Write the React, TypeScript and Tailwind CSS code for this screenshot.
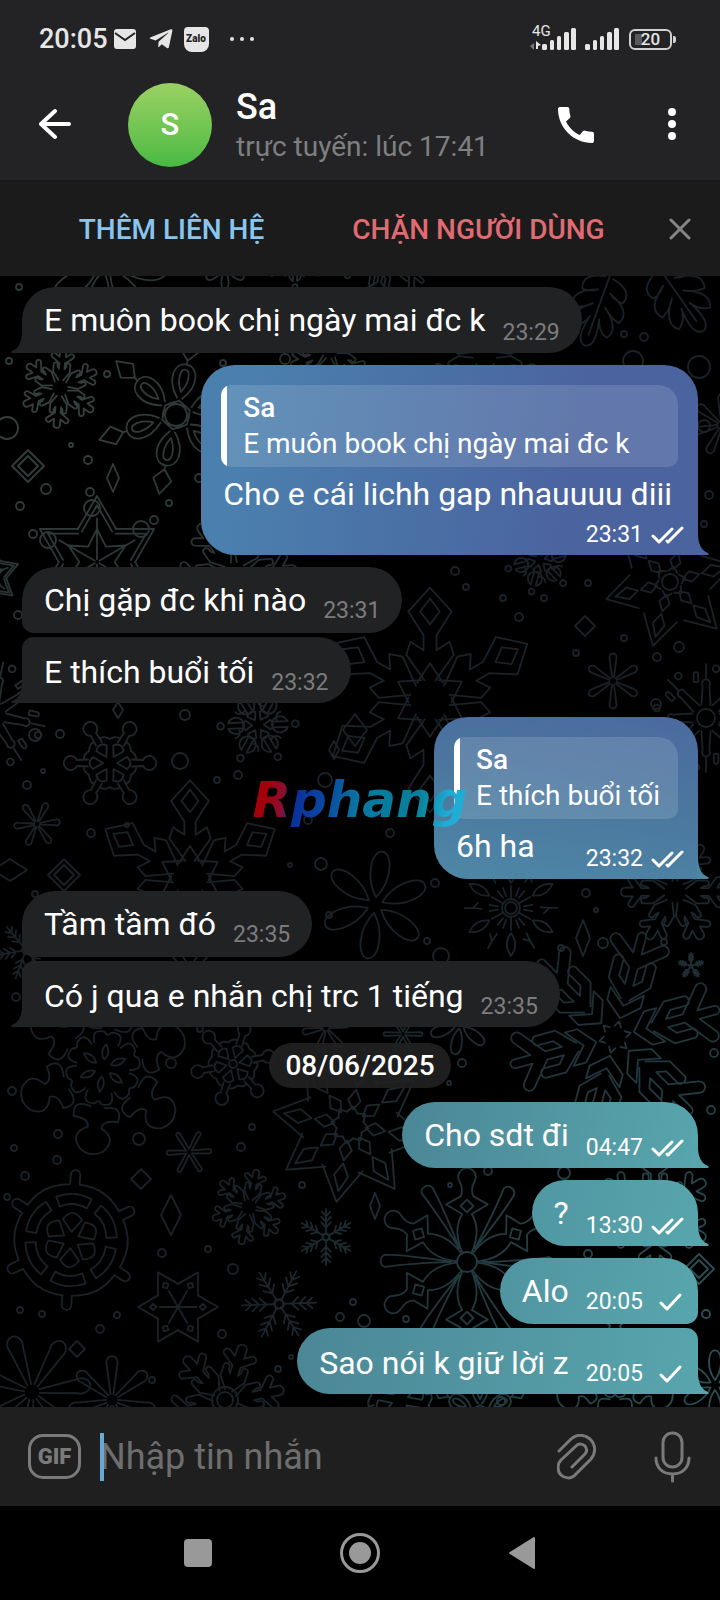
import { MdCall } from "react-icons/md";
import { FaTelegramPlane } from "react-icons/fa";
import clsx from "clsx";

type Position = "single" | "first" | "last";

type Message = {
    text: string;
    time: string;
    out?: boolean;
    seen?: boolean;
    position?: Position;
    reply?: string;
    stacked?: boolean; // time goes on its own row under the text
    fill?: string;
    tail?: string;
};

const before: Message[] = [
    { text: "E muôn book chị ngày mai đc k", time: "23:29" },
    {
        text: "Cho e cái lichh gap nhauuuu diii",
        time: "23:31",
        out: true,
        seen: true,
        stacked: true,
        reply: "E muôn book chị ngày mai đc k",
        fill: "bg-[linear-gradient(100deg,#4b80ae_8%,#4a70a6_45%,#4b639f_75%)]",
        tail: "text-[#4b659f]",
    },
    { text: "Chị gặp đc khi nào", time: "23:31", position: "first" },
    { text: "E thích buổi tối", time: "23:32", position: "last" },
    {
        text: "6h ha",
        time: "23:32",
        out: true,
        seen: true,
        reply: "E thích buổi tối",
        fill: "bg-[linear-gradient(190deg,#4b6b9f_5%,#4b789f_50%,#4e87a6)]",
        tail: "text-[#4e87a6]",
    },
    { text: "Tầm tầm đó", time: "23:35", position: "first" },
    { text: "Có j qua e nhắn chị trc 1 tiếng", time: "23:35", position: "last" },
];

const teal = "bg-[linear-gradient(100deg,#4b8796,#58a5ad)]";

const after: Message[] = [
    { text: "Cho sdt đi", time: "04:47", out: true, seen: true, fill: teal, tail: "text-[#58a5ad]" },
    { text: "?", time: "13:30", out: true, seen: true, fill: "bg-[linear-gradient(100deg,#5097a2,#58a5ad)]", tail: "text-[#58a5ad]" },
    { text: "Alo", time: "20:05", out: true, position: "first", fill: "bg-[linear-gradient(100deg,#5095a1,#58a5ad)]" },
    { text: "Sao nói k giữ lời z", time: "20:05", out: true, position: "last", fill: teal, tail: "text-[#58a5ad]" },
];

/* ---------- wallpaper ---------- */

// each arm points up from the origin and is about 100 units long
const arms: Record<string, string> = {
    fern: "M-6-20L-21-40V-58a5 5 0 0 1 10 0V-54L-7-48V-62L-26-76a6 6 0 0 1 8-9L-8-78V-92a8 8 0 0 1 16 0V-78L18-85a6 6 0 0 1 8 9L7-62V-48L11-54V-58a5 5 0 0 1 10 0V-40L6-20",
    petal: "M0-14C-24-46-20-96 0-96S24-46 0-14Z",
    drop: "M-3-12L-11-72A12 14 0 1 1 11-72L3-12",
    knob: "M-7-44L-6-66A14 14 0 1 1 6-66L7-44M-24-42Q-16-54-7-52M24-42Q16-54 7-52M0-14L-12-34Q0-48 12-34Z",
    ring: "M-6-34V-62A17 17 0 1 0 6-62V-34M-7-78a7 7 0 1 0 14 0a7 7 0 1 0-14 0M-6-40Q-22-34-26-48M0-12L-10-26Q0-36 10-26Z",
    loops: "M-13-15L0-22L13-15M-4-26C-26-52-18-78 0-78S26-52 4-26M0-36C-10-52-8-70 0-70S10-52 0-36M0-80V-86M0-84L-14-100L0-122L14-100Z",
    rhomb: "M-5-18L-22-42L-18-54L-6-46V-60L-20-82L0-104L20-82L6-60V-46L18-54L22-42L5-18M0-70L-9-82L0-94L9-82ZM-12-16L0-34L12-16",
    tree: "M-4-36L-20-52V-72a5 5 0 0 1 9 0V-56L-4-50V-66L-26-84a5 5 0 0 1 7-8L-4-80V-96a4 4 0 0 1 8 0V-80L19-92a5 5 0 0 1 7 8L4-66V-50L11-56V-72a5 5 0 0 1 9 0V-52L4-36M-16-32L0-18L16-32V-44L0-30L-16-44ZM-3-10L0-15L3-10",
    star: "M-29-50L0-100L29-50M-23-46L0-86L23-46M-13-24L0-50L13-24M0-4V-66",
    dotstar: "M-29-50L0-100L29-50M0-2V-46M-8-62L0-70L8-62L0-54Z",
    leafstar: "M-26-56L0-100L26-56M0-50L-9-66L0-86L9-66ZM0-20L-8-32L0-46L8-32ZM-7-16L0-24L7-16",
    burst: "M-8-24L-6-58A7 7 0 1 1 6-58L8-24M0-72V-96M-22-64V-78a4 4 0 0 1 8 0V-64ZM12-88a6 6 0 1 0 12 0a6 6 0 1 0-12 0",
    wheel: "M-7-84V-96a7 7 0 0 1 14 0V-84M7-82Q30-80 42-72M-7-82Q-30-80-42-72M-26-62Q0-74 26-62L20-48Q0-58-20-48ZM0-12L-14-30Q0-50 14-30Z",
    line: "M0-10V-100M0-34L-17-52M0-34L17-52M0-54L-17-72M0-54L17-72M0-74L-14-90M0-74L14-90M-6-10L0-16L6-10",
    crystal: "M0-20V-44M0-50C-12-66-10-82 0-96C10-82 12-66 0-50ZM-10-24L-16-40M10-24L16-40M28-52L38-66L42-52M38-66L46-80",
    ribbon: "M-6-12Q-18-40-6-60L-26-72L-8-82Q-4-90-9-100A11 11 0 1 1 9-100Q4-90 8-82L26-72L6-60Q18-40 6-12M0-62L-8-70L0-78L8-70ZM10-17Q34-62 46-92a8 8 0 0 1 13 8Q46-62 10-17",
    stick: "M-7-12L-9-88a9 9 0 0 1 18 0L7-12",
    bush: "M-8-46Q-30-40-26-60Q-8-60-8-70Q-28-80-14-96Q0-106 14-96Q28-80 8-70Q8-60 26-60Q30-40 8-46M-14-28Q-20-44-4-42Q0-36 4-42Q20-44 14-28M0-10q-7-8 0-18q7 10 0 18Z",
    oak: "M-5-10Q-34-16-26-34Q-16-34-8-28Q-40-40-30-58Q-18-56-8-46Q-34-66-22-80Q-10-76-6-62Q-14-96 0-98Q14-96 6-62Q10-76 22-80Q34-66 8-46Q18-56 30-58Q40-40 8-28Q16-34 26-34Q34-16 5-10M0 4V-84",
};

type FlakeSpec = [kind: string, x: number, y: number, r: number, n: number, rot: number];

const flakes: FlakeSpec[] = [
    ["petal", 105, 262, 64, 8, 10],
    ["petal", 225, 268, 22, 6, 0],
    ["ring", 295, 260, 34, 6, 0],
    ["tree", 385, 250, 50, 6, 10],
    ["fern", 60, 388, 40, 6, 5],
    ["loops", 176, 415, 66, 6, 12],
    ["star", 97, 562, 66, 6, 0],
    ["fern", 235, 575, 62, 6, 25],
    ["fern", 330, 350, 42, 6, 8],
    ["fern", 485, 355, 58, 6, 0],
    ["oak", 612, 270, 82, 1, 200],
    ["oak", 655, 262, 86, 1, 145],
    ["drop", 722, 425, 34, 7, 0],
    ["star", -12, 575, 32, 6, 10],
    ["ring", 540, 560, 42, 6, 15],
    ["leafstar", 670, 582, 66, 6, 15],
    ["burst", -8, 715, 56, 8, 12],
    ["knob", 110, 763, 50, 6, 30],
    ["drop", 37, 824, 25, 6, 25],
    ["ring", 258, 725, 48, 6, 28],
    ["rhomb", 190, 878, 94, 6, 0],
    ["rhomb", 430, 700, 108, 6, 0],
    ["drop", 613, 681, 30, 6, 0],
    ["burst", 706, 718, 56, 8, 0],
    ["petal", 375, 905, 56, 6, 8],
    ["crystal", 511, 908, 50, 6, 0],
    ["fern", 675, 892, 54, 6, 30],
    ["line", 26, 950, 30, 6, 20],
    ["line", 691, 966, 13, 5, 0],
    ["tree", 615, 1037, 108, 6, 15],
    ["bush", 103, 1068, 86, 6, 8],
    ["knob", 233, 1064, 46, 6, 18],
    ["drop", 326, 1028, 26, 6, 20],
    ["stick", 403, 1034, 20, 6, 30],
    ["petal", 460, 1024, 32, 6, 10],
    ["leafstar", 350, 1125, 78, 8, 10],
    ["wheel", 71, 1240, 68, 6, 4],
    ["stick", 189, 1152, 23, 6, 28],
    ["fern", 249, 1207, 38, 6, 12],
    ["line", 326, 1237, 28, 6, 0],
    ["dotstar", 178, 1307, 40, 6, 30],
    ["line", 279, 1304, 37, 6, 28],
    ["drop", 32, 1392, 64, 7, -20],
    ["drop", 112, 1400, 48, 7, 0],
    ["fern", 225, 1402, 60, 6, 18],
    ["ribbon", 467, 1262, 80, 6, 0],
    ["fern", 655, 1210, 58, 6, 0],
    ["bush", 615, 1370, 64, 6, 0],
    ["knob", 400, 1400, 60, 6, 10],
    ["loops", 480, 1415, 44, 6, 0],
    ["petal", 715, 1385, 36, 6, 0],
];

const dots: [number, number, number][] = [
    [19, 287, 3], [9, 361, 3], [107, 374, 3], [7, 428, 11], [71, 445, 2], [88, 460, 4], [46, 489, 5], [20, 506, 4], [169, 503, 3],
    [92, 508, 8], [90, 492, 4], [48, 540, 8], [33, 534, 4], [141, 529, 8], [154, 520, 4], [176, 415, 11], [223, 363, 3], [199, 478, 4],
    [285, 359, 5], [624, 334, 3], [644, 337, 4], [633, 361, 10], [699, 367, 11], [704, 426, 6], [709, 495, 4], [704, 524, 3],
    [18, 615, 4], [35, 735, 6], [60, 734, 4], [185, 715, 5], [180, 761, 8], [27, 785, 4], [43, 771, 2], [91, 833, 4], [127, 825, 2],
    [217, 780, 3], [238, 775, 4], [308, 820, 4], [321, 864, 6], [290, 865, 2], [325, 780, 7], [455, 571, 4], [466, 587, 3], [544, 598, 3],
    [519, 617, 4], [503, 598, 3], [588, 583, 3], [624, 638, 3], [576, 653, 3], [657, 657, 4], [679, 647, 5], [656, 704, 5], [670, 582, 8],
    [706, 718, 9], [390, 833, 4], [435, 883, 4], [586, 893, 4], [596, 910, 2], [561, 948, 3], [603, 943, 5], [427, 941, 3], [441, 956, 8],
    [664, 942, 3], [511, 908, 9], [511, 908, 6], [329, 915, 3], [35, 894, 3], [16, 997, 4], [714, 1053, 4], [711, 1110, 4], [171, 1063, 5],
    [12, 1091, 4], [200, 1029, 3], [233, 1064, 4], [462, 1063, 4], [449, 1083, 2], [58, 1134, 4], [14, 1148, 3], [57, 1160, 4], [25, 1176, 4],
    [7, 1197, 3], [139, 1139, 6], [252, 1127, 3], [241, 1147, 4], [302, 1185, 3], [162, 1253, 4], [208, 1249, 3], [233, 1269, 5],
    [20, 1310, 3], [42, 1314, 3], [117, 1315, 3], [100, 1329, 4], [222, 1334, 4], [152, 1380, 3], [291, 1357, 2], [278, 1369, 3],
    [353, 1302, 3], [340, 1317, 4], [467, 1262, 10], [564, 1173, 6], [488, 1171, 4], [450, 1185, 2], [588, 1254, 4], [706, 1314, 4],
    [406, 1319, 3], [364, 1321, 6], [501, 1401, 4], [225, 1400, 8], [225, 1400, 13],
];

// centre, half width, half height
const diamonds: [number, number, number, number][] = [
    [28, 466, 16, 16], [28, 466, 10, 10], [113, 478, 6, 14], [118, 710, 5, 8], [334, 750, 5, 9], [64, 875, 16, 16], [64, 875, 10, 10],
    [10, 870, 17, 11], [585, 626, 10, 10], [583, 938, 7, 18], [141, 1179, 10, 10], [77, 1349, 8, 8], [171, 1215, 10, 20],
    [375, 1206, 5, 13], [699, 1269, 15, 15], [699, 1269, 9, 9], [355, 730, 12, 16],
];

function Wallpaper() {
    return (
        <svg
            className="absolute inset-0 h-full w-full"
            viewBox="0 276 720 1131"
            preserveAspectRatio="xMidYMid slice"
            aria-hidden="true"
        >
            <defs>
                <radialGradient id="topGlow" gradientUnits="userSpaceOnUse" cx="60" cy="420" r="420">
                    <stop offset="0" stopColor="#36423f" />
                    <stop offset="1" stopColor="#36423f" stopOpacity="0" />
                </radialGradient>
                <radialGradient id="bottomGlow" gradientUnits="userSpaceOnUse" cx="720" cy="1330" r="480">
                    <stop offset="0" stopColor="#2c555a" />
                    <stop offset="1" stopColor="#2c555a" stopOpacity="0" />
                </radialGradient>
                <mask id="lines" maskUnits="userSpaceOnUse" x="0" y="276" width="720" height="1131">
                    <g fill="none" stroke="#fff" strokeWidth="1.8" strokeLinecap="round" strokeLinejoin="round">
                        {flakes.map(([kind, x, y, r, n, rot]) => (
                            <g key={`${x}-${y}`} transform={`translate(${x} ${y}) rotate(${rot}) scale(${r / 100})`}>
                                {Array.from({ length: n }, (_, i) => (
                                    <path
                                        key={i}
                                        d={arms[kind]}
                                        transform={`rotate(${(360 / n) * i})`}
                                        vectorEffect="non-scaling-stroke"
                                    />
                                ))}
                            </g>
                        ))}
                        {dots.map(([x, y, r], i) => (
                            <circle key={i} cx={x} cy={y} r={r} />
                        ))}
                        {diamonds.map(([x, y, w, h], i) => (
                            <path key={i} d={`M${x} ${y - h}L${x + w} ${y}L${x} ${y + h}L${x - w} ${y}Z`} />
                        ))}
                    </g>
                </mask>
            </defs>
            <g mask="url(#lines)">
                <rect x="0" y="276" width="720" height="1131" fill="#1a2127" />
                <rect x="0" y="276" width="720" height="1131" fill="url(#topGlow)" />
                <rect x="0" y="276" width="720" height="1131" fill="url(#bottomGlow)" />
            </g>
        </svg>
    );
}

/* ---------- status bar ---------- */

function Signal() {
    return (
        <svg width="34" height="24" viewBox="0 0 34 24" fill="#e6e6e6" aria-hidden="true">
            <rect x="0" y="17" width="5" height="6" rx="1.5" />
            <rect x="8" y="13" width="4" height="10" rx="1.5" />
            <rect x="15" y="9" width="4" height="14" rx="1.5" />
            <rect x="22" y="5" width="5" height="18" rx="1.5" />
            <rect x="29" y="1" width="5" height="22" rx="1.5" />
        </svg>
    );
}

function StatusBar() {
    return (
        <div className="flex h-[70px] items-center pt-2 pr-12 pl-[39px] text-[#e6e6e6]">
            <span className="text-[27px] leading-8 font-medium">20:05</span>
            <svg className="ml-1.5" width="22" height="20" viewBox="0 0 22 20" aria-hidden="true">
                <rect width="22" height="20" rx="3" fill="#e6e6e6" />
                <path d="M1 4L11 11L21 4" fill="none" stroke="#232325" strokeWidth="2" />
            </svg>
            <FaTelegramPlane className="ml-3 h-[26px] w-[26px]" aria-hidden="true" />
            <span className="ml-2.5 flex h-[25px] w-[25px] items-center justify-center rounded-[4px] rounded-b-[8px] bg-[#e6e6e6] text-[10px] leading-3 font-black text-[#232325]">
                Zalo
            </span>
            <svg className="ml-5" width="26" height="6" viewBox="0 0 26 6" fill="#e6e6e6" aria-hidden="true">
                <circle cx="3" cy="3" r="2" />
                <circle cx="13" cy="3" r="2" />
                <circle cx="23" cy="3" r="2" />
            </svg>
            <span className="relative ml-auto">
                <Signal />
                <span className="absolute -top-1 -left-2.5 text-[15px] leading-[16px]">4G</span>
                <svg className="absolute bottom-0 -left-3" width="12" height="10" viewBox="0 0 12 10" aria-hidden="true">
                    <path d="M0 5L4 2V9Z" fill="#77777a" />
                    <path d="M6 0L11 4L8 5V8H6Z" fill="#e6e6e6" />
                </svg>
            </span>
            <span className="ml-[9px]">
                <Signal />
            </span>
            <span className="relative ml-[10px] flex h-[21px] w-[43px] items-center justify-center rounded-[6px] border-2 border-[#d0d0d0]">
                <span className="absolute top-[3px] left-1 h-[11px] w-[7px] bg-[#5a5a5c]" />
                <span className="relative text-[17px] leading-5 font-medium">20</span>
                <span className="absolute top-[5px] -right-[6px] h-[7px] w-[3px] rounded-r-[2px] bg-[#d0d0d0]" />
            </span>
        </div>
    );
}

function Header() {
    return (
        <header className="bg-[#232325]">
            <StatusBar />
            <div className="flex h-[110px] items-center pr-[27px] pl-[39px]">
                <button type="button" aria-label="Quay lại">
                    <svg width="33" height="34" viewBox="0 0 33 34" fill="none" stroke="#fff" strokeWidth="4" strokeLinecap="round" strokeLinejoin="round">
                        <path d="M30 16H3M16 3L2 16L16 29" />
                    </svg>
                </button>
                <div className="ml-14 flex h-[84px] w-[84px] items-center justify-center rounded-full bg-linear-to-b from-[#9ad164] to-[#46ba43] text-[31px] font-medium">
                    S
                </div>
                <div className="ml-6">
                    <h1 className="text-[36px] leading-[44px] font-medium">Sa</h1>
                    <p className="text-[28px] leading-9 text-[#7f7f81]">trực tuyến: lúc 17:41</p>
                </div>
                <button type="button" aria-label="Gọi" className="ml-auto">
                    <MdCall className="h-12 w-12" />
                </button>
                <button type="button" aria-label="Tùy chọn khác" className="ml-[51px]">
                    <svg width="42" height="34" viewBox="0 0 42 34" fill="#fff">
                        <circle cx="21" cy="4" r="4" />
                        <circle cx="21" cy="16" r="4" />
                        <circle cx="21" cy="28" r="4" />
                    </svg>
                </button>
            </div>
        </header>
    );
}

function ContactBar() {
    return (
        <div className="flex h-24 items-center border-t-2 border-[#181818] bg-[#1b1b1b] pl-[18px] text-[28px] leading-9 font-medium">
            <button type="button" className="flex-1 pt-0.5 text-[#88c6f0]">
                THÊM LIÊN HỆ
            </button>
            <button type="button" className="flex-1 pt-0.5 text-[#e16b72]">
                CHẶN NGƯỜI DÙNG
            </button>
            <button type="button" aria-label="Đóng" className="flex w-[88px] justify-center pl-2">
                <svg width="22" height="22" viewBox="0 0 22 22" stroke="#858585" strokeWidth="3" strokeLinecap="round">
                    <path d="M2 2L20 20M20 2L2 20" />
                </svg>
            </button>
        </div>
    );
}

/* ---------- messages ---------- */

function Ticks({ seen }: { seen?: boolean }) {
    return (
        <svg
            className="ml-2"
            width="33"
            height="18"
            viewBox="0 0 33 18"
            fill="none"
            stroke="currentColor"
            strokeWidth="3"
            strokeLinecap="round"
            strokeLinejoin="round"
            role="img"
            aria-label={seen ? "Đã xem" : "Đã gửi"}
        >
            <path d={seen ? "M2 10L8 16L21 3M16 15L17 16L31 2" : "M10 10L16 16L29 2"} />
        </svg>
    );
}

function Bubble({ message }: { message: Message }) {
    const { text, time, out, seen, position = "single", reply, stacked, fill, tail } = message;
    const hasTail = position !== "first";

    return (
        <li className={clsx("flex px-[22px]", out && "justify-end", position === "last" ? "pt-1 pb-0.5" : "pt-3")}>
            <div
                className={clsx(
                    "relative rounded-[34px]",
                    out ? fill : "bg-[#212224]",
                    out && hasTail && "rounded-br-none",
                    !out && hasTail && "rounded-bl-none",
                    out && position === "first" && "rounded-br-[12px]",
                    out && position === "last" && "rounded-tr-[12px]",
                    !out && position === "first" && "rounded-bl-[12px]",
                    !out && position === "last" && "rounded-tl-[12px]"
                )}
            >
                {reply && (
                    <blockquote className="mx-5 mt-5 mb-[7px] flex overflow-hidden rounded-[10px] rounded-tr-[20px] bg-white/13 text-[28px] leading-9">
                        <span className="w-1.5 bg-white" />
                        <div className="py-[5px] pr-[18px] pl-4">
                            <p className="font-medium">Sa</p>
                            <p>{reply}</p>
                        </div>
                    </blockquote>
                )}
                <div
                    className={clsx(
                        "flex pl-[22px]",
                        stacked ? "flex-col" : "justify-end",
                        out ? "pr-[14px]" : "pr-[22px]",
                        !reply && "min-h-[66px]",
                        !reply && (position === "last" ? "pt-[15px]" : "pt-[13px]"),
                        position === "first" ? "pb-2" : "pb-1.5"
                    )}
                >
                    <p
                        className={clsx(
                            "mr-auto self-start text-[32px] leading-10",
                            stacked ? "pr-3" : "pr-[17px]",
                            reply && "pb-[7px]"
                        )}
                    >
                        {text}
                    </p>
                    <span className={clsx("flex items-center self-end text-[23px] leading-7", out ? "text-white" : "text-[#7c7c7e]")}>
                        <time>{time}</time>
                        {out && <Ticks seen={seen} />}
                    </span>
                </div>
                {hasTail && (
                    <svg
                        className={clsx("absolute bottom-0", out ? "-right-[11px]" : "-left-[11px] -scale-x-100", out ? tail : "text-[#212224]")}
                        width="12"
                        height="22"
                        viewBox="0 0 12 22"
                        fill="currentColor"
                        aria-hidden="true"
                    >
                        <path d="M0 0H1C1 11 4 17 11 20Q13 22 10 22H0Z" />
                    </svg>
                )}
            </div>
        </li>
    );
}

function Composer() {
    return (
        <form className="flex h-[99px] items-center bg-[#1f1f1f] pr-[29px] pl-7" onSubmit={(e) => e.preventDefault()}>
            <button
                type="button"
                className="flex h-[45px] w-[53px] shrink-0 items-center justify-center rounded-[15px] border-[3px] border-[#7a7a7a] text-[22px] leading-6 font-black text-[#7a7a7a]"
            >
                GIF
            </button>
            <span className="z-10 -mr-1 ml-[19px] h-12 w-1 shrink-0 bg-[#69a9d6]" />
            <input
                type="text"
                aria-label="Nhập tin nhắn"
                placeholder="Nhập tin nhắn"
                className="h-12 min-w-0 flex-1 bg-transparent text-[36px] leading-[44px] text-white outline-none placeholder:text-[#6e6e6e]"
            />
            <button type="button" aria-label="Đính kèm">
                <svg width="40" height="46" viewBox="0 0 40 46" fill="none" stroke="#7a7a7a" strokeWidth="3" strokeLinecap="round">
                    <path d="M2 17L13 6C19 0 27 0 33 5C39 11 39 19 34 25L19 40C14 46 7 44 4 41C0 37 0 30 4 26L19 12C22 9 26 10 28 12C30 15 30 18 28 20L15 33" />
                </svg>
            </button>
            <button type="button" aria-label="Ghi âm" className="ml-[57px]">
                <svg width="37" height="52" viewBox="0 0 37 52" fill="none" stroke="#7a7a7a" strokeWidth="3" strokeLinecap="round">
                    <rect x="9" y="2" width="19" height="34" rx="9.5" />
                    <path d="M2 27C2 37 9 43 18.5 43S35 37 35 27M18.5 43V50" />
                </svg>
            </button>
        </form>
    );
}

function SystemNav() {
    return (
        <nav className="flex h-[94px] items-center justify-center gap-[122px] bg-black" aria-label="Điều hướng hệ thống">
            <button type="button" aria-label="Gần đây" className="flex w-10 justify-center">
                <span className="h-7 w-7 rounded-[4px] bg-[#999]" />
            </button>
            <button type="button" aria-label="Màn hình chính" className="flex h-10 w-10 items-center justify-center rounded-full border-[3px] border-[#999]">
                <span className="h-[22px] w-[22px] rounded-full bg-[#999]" />
            </button>
            <button type="button" aria-label="Trở về" className="flex w-10 justify-center">
                <svg width="28" height="34" viewBox="0 0 28 34" fill="#999" stroke="#999" strokeWidth="2" strokeLinejoin="round">
                    <path d="M2 17L26 2V32Z" />
                </svg>
            </button>
        </nav>
    );
}

export default function App() {
    return (
        <div className="relative flex min-h-screen flex-col bg-black font-[Roboto,sans-serif] text-white">
            <Header />
            <ContactBar />
            <main className="relative flex-1 overflow-hidden pb-2.5">
                <Wallpaper />
                <ul className="relative -mt-px">
                    {before.map((message, i) => (
                        <Bubble key={i} message={message} />
                    ))}
                </ul>
                <div className="relative mt-3.5 flex justify-center">
                    <time className="rounded-full bg-[#212122]/90 px-4 py-1 text-[28px] leading-[37px] font-medium">08/06/2025</time>
                </div>
                <ul className="relative pt-0.5">
                    {after.map((message, i) => (
                        <Bubble key={i} message={message} />
                    ))}
                </ul>
            </main>
            <Composer />
            <SystemNav />
            <div className="pointer-events-none absolute inset-0 flex items-center justify-center">
                <span className="bg-[linear-gradient(100deg,#a3000c_10%,#8a1030_17%,#0a2f9c_22%,#0a4aa0_36%,#0878a0_50%,#08809a_75%,#20acd4_88%)] bg-clip-text px-1 font-['DejaVu_Sans',sans-serif] text-[50px] leading-[60px] font-bold text-transparent italic">
                    Rphang
                </span>
            </div>
        </div>
    );
}
